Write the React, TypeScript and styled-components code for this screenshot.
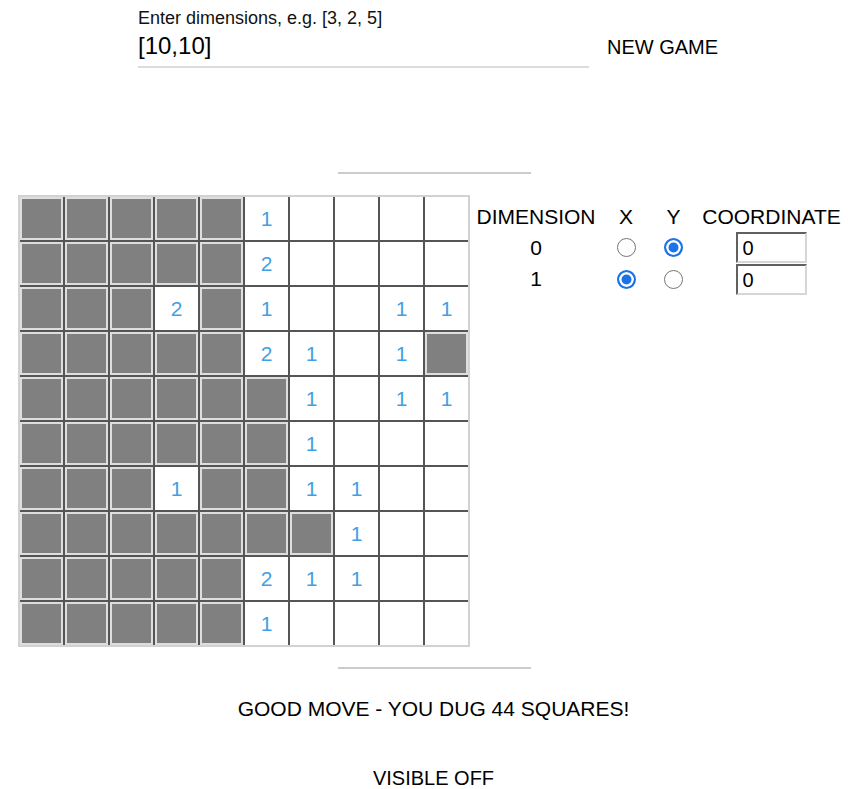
import React from "react";
import styled, { createGlobalStyle } from "styled-components";

const Global = createGlobalStyle`
  body {
    margin: 8px;
    background: #ffffff;
    font-family: "Liberation Sans", Arial, sans-serif;
    color: #000;
  }
`;

const Page = styled.div`
  display: flex;
  flex-direction: column;
`;

const FormRow = styled.div`
  display: flex;
  align-items: flex-end;
  margin-left: 130px;
`;

const Field = styled.div`
  width: 451px;
  display: flex;
  flex-direction: column;
  border-bottom: 2px solid #dcdcdc;
  padding-bottom: 6px;
`;

const FieldLabel = styled.label`
  font-size: 18px;
  line-height: 21px;
  color: #111;
`;

const FieldInput = styled.input`
  font-family: "Liberation Sans", Arial, sans-serif;
  font-size: 24px;
  line-height: 28px;
  height: 28px;
  border: none;
  outline: none;
  padding: 0;
  margin-top: 3px;
  background: transparent;
  color: #000;
`;

const TextButton = styled.button`
  font-family: "Liberation Sans", Arial, sans-serif;
  font-size: 20px;
  line-height: 24px;
  background: none;
  border: none;
  padding: 0;
  color: #000;
  align-self: flex-end;
  margin-bottom: 9px;
  margin-left: 18px;
  cursor: pointer;
`;

const Divider = styled.div<{ $top: number }>`
  width: 193px;
  height: 2px;
  background: #cccccc;
  margin: ${(p) => p.$top}px 0 0 330px;
`;

const BoardSection = styled.div`
  display: flex;
  align-items: flex-start;
  margin-top: 21px;
  padding-left: 10px;
  gap: 2px;
`;

const Board = styled.div`
  display: grid;
  grid-template-columns: repeat(10, 43px);
  grid-auto-rows: 43px;
  gap: 2px;
  background: #555555;
  border: 2px solid #d2d2d2;
`;

const Cell = styled.div<{ $hidden: boolean }>`
  box-sizing: border-box;
  background: ${(p) => (p.$hidden ? "#808080" : "#ffffff")};
  border: ${(p) => (p.$hidden ? "2px solid #dedede" : "none")};
  display: flex;
  align-items: center;
  justify-content: center;
  font-size: 21px;
  color: #419fe3;
`;

const Controls = styled.div`
  display: grid;
  grid-template-columns: 128px 52px 43px 153px;
  grid-template-rows: 30px 31px 32px;
  margin-top: 7px;
  font-size: 21px;
`;

const HeadCell = styled.div`
  display: flex;
  align-items: center;
  justify-content: center;
  white-space: nowrap;
`;

const BodyCell = styled.div`
  display: flex;
  align-items: center;
  justify-content: center;
`;

const Radio = styled.input`
  appearance: none;
  -webkit-appearance: none;
  margin: 0;
  width: 19px;
  height: 19px;
  border-radius: 50%;
  box-sizing: border-box;
  border: 1.5px solid #767676;
  background: #fff;
  &:checked {
    border: 2px solid #1a73e8;
    background: #1a73e8;
    box-shadow: inset 0 0 0 2.5px #ffffff;
  }
`;

const CoordInput = styled.input`
  box-sizing: border-box;
  width: 71px;
  height: 31px;
  font-family: "Liberation Sans", Arial, sans-serif;
  font-size: 20px;
  padding: 2px 0 0 5px;
  border: 2px inset #c4c4c4;
  border-color: #b4b4b4 #d6d6d6 #d6d6d6 #b4b4b4;
  outline: none;
  margin-left: -1px;
  color: #000;
`;

const StatusText = styled.div<{ $top: number; $size: number }>`
  margin-top: ${(p) => p.$top}px;
  font-size: ${(p) => p.$size}px;
  line-height: 24px;
  text-align: center;
  padding-left: 11px;
`;

const G = -1;
const W = 0;
const board: number[][] = [
  [G, G, G, G, G, 1, W, W, W, W],
  [G, G, G, G, G, 2, W, W, W, W],
  [G, G, G, 2, G, 1, W, W, 1, 1],
  [G, G, G, G, G, 2, 1, W, 1, G],
  [G, G, G, G, G, G, 1, W, 1, 1],
  [G, G, G, G, G, G, 1, W, W, W],
  [G, G, G, 1, G, G, 1, 1, W, W],
  [G, G, G, G, G, G, G, 1, W, W],
  [G, G, G, G, G, 2, 1, 1, W, W],
  [G, G, G, G, G, 1, W, W, W, W],
];

export default function App() {
  return (
    <Page>
      <Global />
      <FormRow>
        <Field>
          <FieldLabel>Enter dimensions, e.g. [3, 2, 5]</FieldLabel>
          <FieldInput defaultValue="[10,10]" />
        </Field>
        <TextButton>NEW GAME</TextButton>
      </FormRow>
      <Divider $top={104} />
      <BoardSection>
        <Board>
          {board.flatMap((row, r) =>
            row.map((v, c) => (
              <Cell key={`${r}-${c}`} $hidden={v === G}>
                {v > 0 ? v : ""}
              </Cell>
            ))
          )}
        </Board>
        <Controls>
          <HeadCell>DIMENSION</HeadCell>
          <HeadCell>X</HeadCell>
          <HeadCell>Y</HeadCell>
          <HeadCell>COORDINATE</HeadCell>

          <BodyCell>0</BodyCell>
          <BodyCell>
            <Radio type="radio" name="d0" />
          </BodyCell>
          <BodyCell>
            <Radio type="radio" name="d0" defaultChecked />
          </BodyCell>
          <BodyCell>
            <CoordInput defaultValue="0" />
          </BodyCell>

          <BodyCell>1</BodyCell>
          <BodyCell>
            <Radio type="radio" name="d1" defaultChecked />
          </BodyCell>
          <BodyCell>
            <Radio type="radio" name="d1" />
          </BodyCell>
          <BodyCell>
            <CoordInput defaultValue="0" />
          </BodyCell>
        </Controls>
      </BoardSection>
      <Divider $top={20} />
      <StatusText $top={28} $size={21}>
        GOOD MOVE - YOU DUG 44 SQUARES!
      </StatusText>
      <StatusText $top={45} $size={20}>
        VISIBLE OFF
      </StatusText>
    </Page>
  );
}
